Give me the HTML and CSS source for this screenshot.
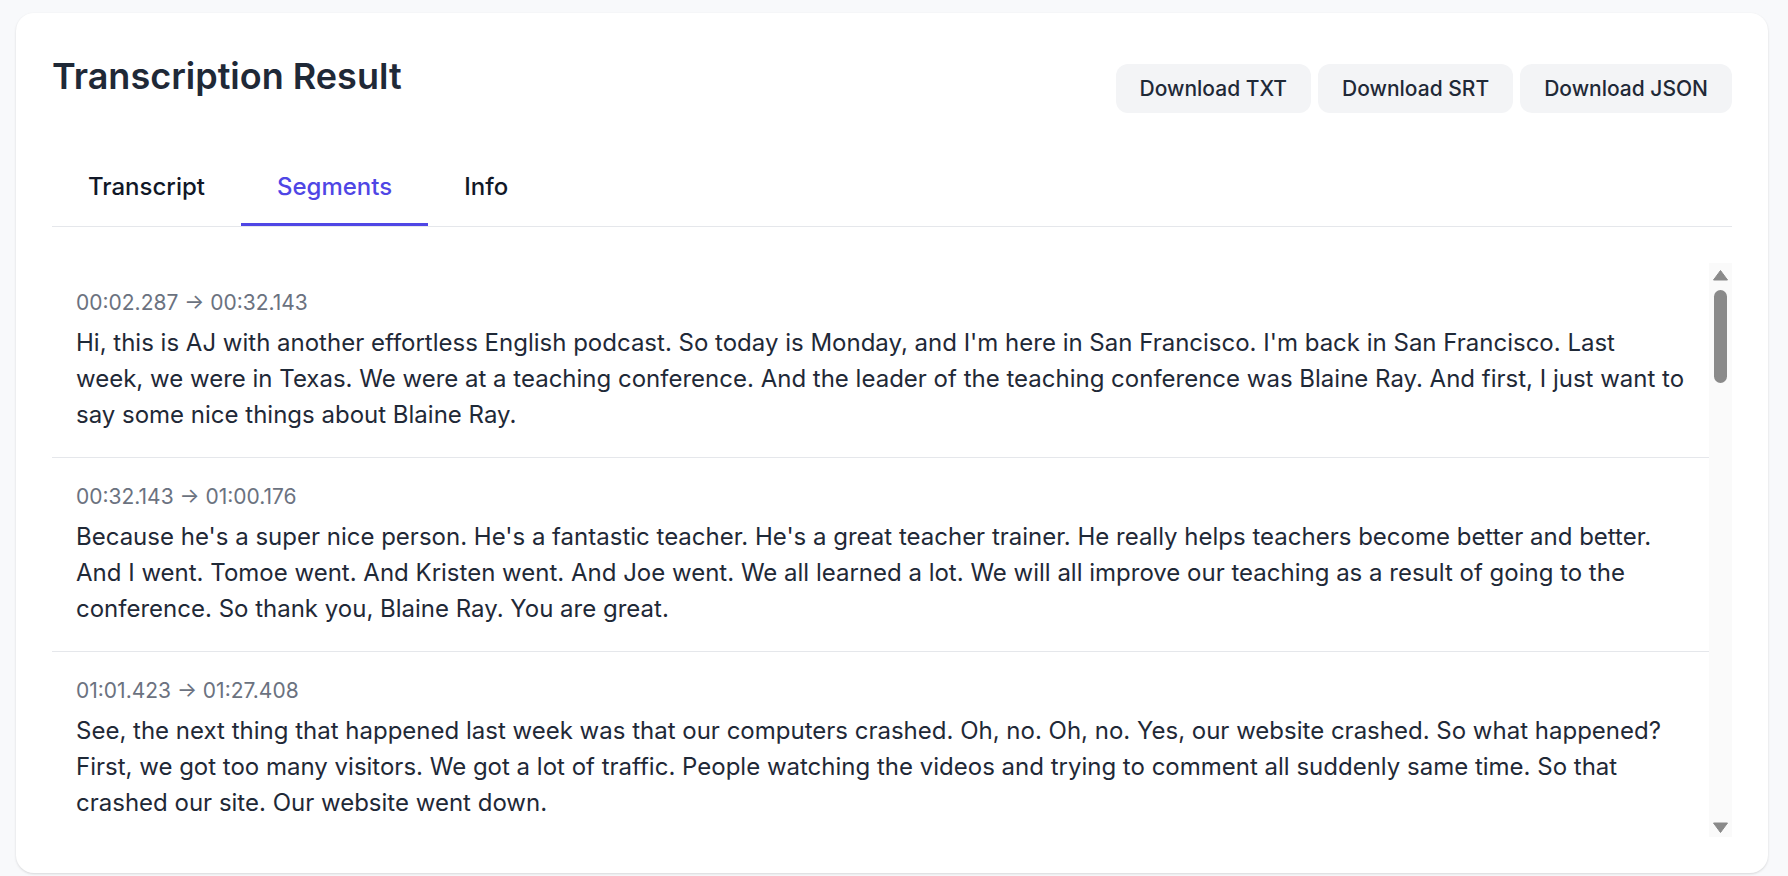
FILE: index.html
```html
<!DOCTYPE html>
<html lang="en">
<head>
<meta charset="utf-8">
<title>Transcription Result</title>
<link rel="stylesheet" href="styles.css">
</head>
<body>
<main class="page">
  <section class="card">
    <header class="card-header">
      <h1 class="title">Transcription Result</h1>
      <div class="actions">
        <button class="btn">Download TXT</button>
        <button class="btn">Download SRT</button>
        <button class="btn">Download JSON</button>
      </div>
    </header>
    <nav class="tabs">
      <div class="tab">Transcript</div>
      <div class="tab tab-active">Segments</div>
      <div class="tab">Info</div>
    </nav>
    <div class="list-wrap">
      <div class="list">
        <div class="segment">
          <div class="time">00:02.287 → 00:32.143</div>
          <p class="seg-text">Hi, this is AJ with another effortless English podcast. So today is Monday, and I'm here in San Francisco. I'm back in San Francisco. Last week, we were in Texas. We were at a teaching conference. And the leader of the teaching conference was Blaine Ray. And first, I just want to say some nice things about Blaine Ray.</p>
        </div>
        <div class="segment">
          <div class="time">00:32.143 → 01:00.176</div>
          <p class="seg-text">Because he's a super nice person. He's a fantastic teacher. He's a great teacher trainer. He really helps teachers become better and better. And I went. Tomoe went. And Kristen went. And Joe went. We all learned a lot. We will all improve our teaching as a result of going to the conference. So thank you, Blaine Ray. You are great.</p>
        </div>
        <div class="segment">
          <div class="time">01:01.423 → 01:27.408</div>
          <p class="seg-text">See, the next thing that happened last week was that our computers crashed. Oh, no. Oh, no. Yes, our website crashed. So what happened? First, we got too many visitors. We got a lot of traffic. People watching the videos and trying to comment all suddenly same time. So that crashed our site. Our website went down.</p>
        </div>
      </div>
      <div class="scrollbar">
        <div class="sb-btn sb-up">
          <svg width="15" height="11" viewBox="0 0 15 11"><path d="M7.5 0.5 L14.5 10 L0.5 10 Z" fill="#8a8a8a" stroke="#8a8a8a" stroke-linejoin="round" stroke-width="1"/></svg>
        </div>
        <div class="sb-thumb"></div>
        <div class="sb-space"></div>
        <div class="sb-btn sb-down">
          <svg width="15" height="11" viewBox="0 0 15 11"><path d="M0.5 1 L14.5 1 L7.5 10.5 Z" fill="#8a8a8a" stroke="#8a8a8a" stroke-linejoin="round" stroke-width="1"/></svg>
        </div>
      </div>
    </div>
  </section>
</main>
</body>
</html>
```
FILE: styles.css
```css
* { box-sizing: border-box; }

html, body {
  margin: 0;
  height: 100%;
}

body {
  background: #f8f9fb;
  font-family: Inter, "Noto Sans", "Liberation Sans", sans-serif;
  color: #1f2937;
  overflow: hidden;
}

.page {
  height: 876px;
  padding: 13px 20px 3px 16px;
}

.card {
  height: 860px;
  background: #ffffff;
  border-radius: 18px;
  box-shadow: 0 1px 3px rgba(0, 0, 0, 0.09), 0 1px 2px rgba(0, 0, 0, 0.05);
  padding: 36px 36px 36px 36px;
  display: flex;
  flex-direction: column;
}

.card-header {
  display: flex;
  justify-content: space-between;
  align-items: flex-start;
  margin-bottom: 38px;
}

.title {
  margin: 0;
  font-size: 36px;
  line-height: 54px;
  font-weight: 600;
  color: #1f2937;
}

.actions {
  display: flex;
  gap: 7px;
  margin-top: 15px;
}

.btn {
  font-family: inherit;
  font-size: 21px;
  line-height: 25px;
  font-weight: 500;
  color: #1f2937;
  background: #f3f4f6;
  border: none;
  border-radius: 12px;
  padding: 12px 24px;
  cursor: pointer;
}

.tabs {
  display: flex;
  border-bottom: 1px solid #e5e7eb;
}

.tab {
  font-size: 24px;
  line-height: 36px;
  font-weight: 500;
  color: #111827;
  padding: 18px 36px;
  border-bottom: 3px solid transparent;
}

.tab-active {
  color: #4f46e5;
  border-bottom-color: #4f46e5;
}

.list-wrap {
  flex: 1;
  min-height: 0;
  margin-top: 36px;
  display: flex;
}

.list {
  flex: 1;
  min-width: 0;
  overflow: hidden;
  padding-top: 1px;
}

.segment {
  padding: 24px 24px 24px 24px;
  border-bottom: 1px solid #e5e7eb;
}

.time {
  font-size: 21px;
  line-height: 30px;
  color: #6b7280;
}

.seg-text {
  margin: 7px 0 0 0;
  font-size: 24px;
  line-height: 36px;
  color: #1f2937;
}

.scrollbar {
  width: 23px;
  flex: none;
  background: #fafafa;
  display: flex;
  flex-direction: column;
  align-items: center;
  padding-bottom: 1px;
}

.sb-btn {
  height: 23px;
  display: flex;
  justify-content: center;
  align-items: center;
}

.sb-up { padding-top: 2px; }
.sb-down {
  align-items: flex-end;
  padding-bottom: 3px;
}

.sb-thumb {
  margin-top: 4px;
  width: 13px;
  height: 93px;
  border-radius: 7px;
  background: #8a8a8a;
}

.sb-space { flex: 1; }
```
